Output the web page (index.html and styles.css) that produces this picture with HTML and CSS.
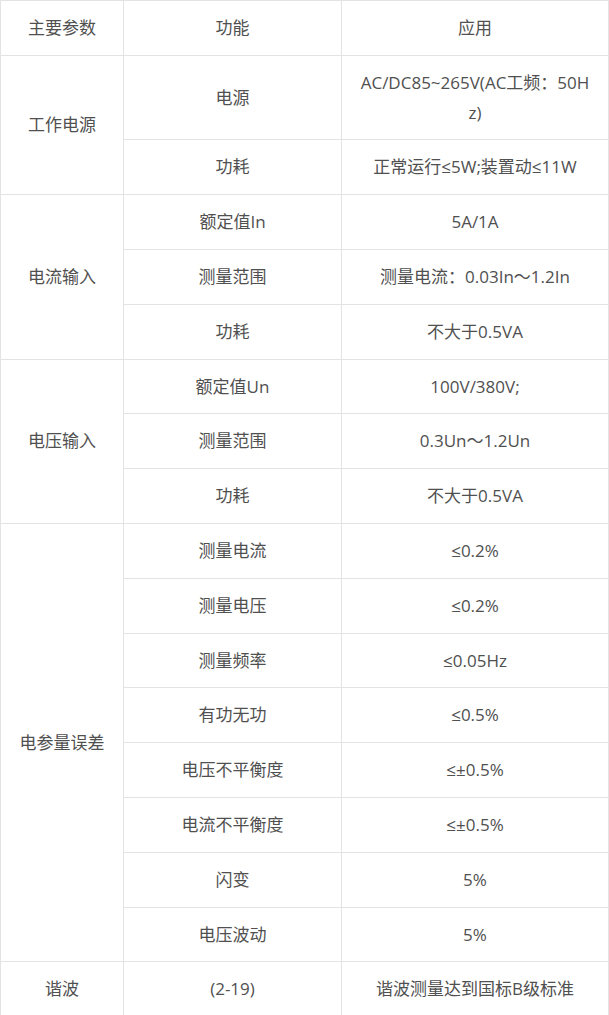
FILE: index.html
```html
<!DOCTYPE html>
<html lang="zh">
<head>
<meta charset="utf-8">
<title>参数</title>
<link rel="stylesheet" href="styles.css">
</head>
<body>
<table class="spec">
  <colgroup>
    <col class="c1"><col class="c2"><col class="c3">
  </colgroup>
  <tbody>
    <tr><td>主要参数</td><td>功能</td><td>应用</td></tr>
    <tr><td rowspan="2">工作电源</td><td>电源</td><td class="wrap tc">AC/DC85~265V(AC工频：50Hz)</td></tr>
    <tr><td>功耗</td><td>正常运行≤5W;装置动≤11W</td></tr>
    <tr><td rowspan="3">电流输入</td><td>额定值In</td><td>5A/1A</td></tr>
    <tr><td>测量范围</td><td class="tc">测量电流：0.03In～1.2In</td></tr>
    <tr><td>功耗</td><td>不大于0.5VA</td></tr>
    <tr><td rowspan="3">电压输入</td><td>额定值Un</td><td>100V/380V;</td></tr>
    <tr><td>测量范围</td><td>0.3Un～1.2Un</td></tr>
    <tr><td>功耗</td><td>不大于0.5VA</td></tr>
    <tr><td rowspan="8">电参量误差</td><td>测量电流</td><td>≤0.2%</td></tr>
    <tr><td>测量电压</td><td>≤0.2%</td></tr>
    <tr><td>测量频率</td><td>≤0.05Hz</td></tr>
    <tr><td>有功无功</td><td>≤0.5%</td></tr>
    <tr><td>电压不平衡度</td><td>≤±0.5%</td></tr>
    <tr><td>电流不平衡度</td><td>≤±0.5%</td></tr>
    <tr><td>闪变</td><td>5%</td></tr>
    <tr><td>电压波动</td><td>5%</td></tr>
    <tr><td>谐波</td><td>(2-19)</td><td>谐波测量达到国标B级标准</td></tr>
  </tbody>
</table>
</body>
</html>
```

FILE: styles.css
```css
html, body {
  margin: 0;
  padding: 0;
  background: #fff;
}

.spec {
  width: 608px;
  border-collapse: collapse;
  table-layout: fixed;
  font-family: "Open Sans", "Noto Sans CJK SC", sans-serif;
  font-size: 17px;
  color: #505050;
}

.c1 { width: 123px; }
.c2 { width: 218px; }
.c3 { width: 267px; }

.spec td {
  border: 1px solid #e3e3e3;
  text-align: center;
  vertical-align: middle;
  padding: 12px 15px;
  line-height: 29.8px;
}

.spec .wrap {
  word-break: break-all;
}

.spec .tc {
  font-family: "Open Sans", "Noto Sans CJK TC", "Noto Sans CJK SC", sans-serif;
}
```
